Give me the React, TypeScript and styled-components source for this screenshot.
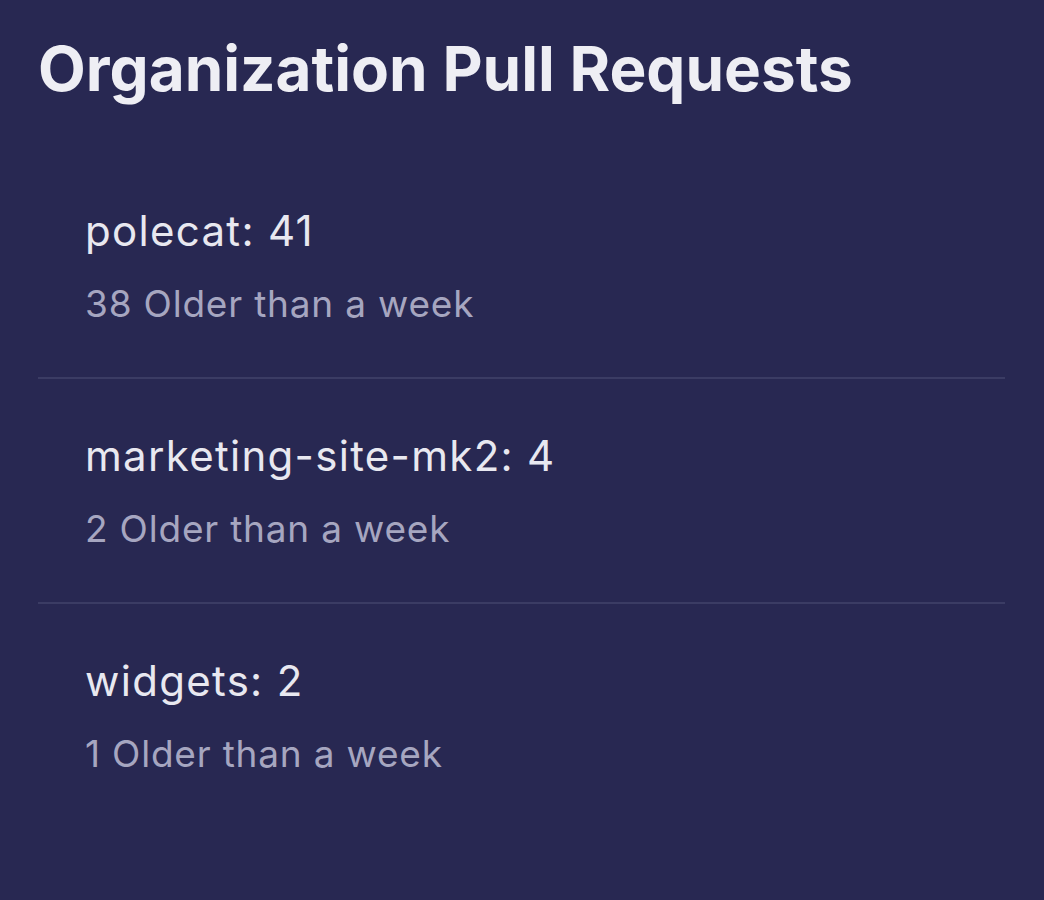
import React from "react";
import styled, { createGlobalStyle } from "styled-components";

const Global = createGlobalStyle`
  html, body { margin: 0; padding: 0; background: #282852; }
  body { font-family: "Inter", sans-serif; font-variant-ligatures: none; }
`;

const Page = styled.div`
  min-height: 100vh;
  box-sizing: border-box;
  background: #282852;
  padding: 34px 38px 0 38px;
`;

const Title = styled.h1`
  margin: 0;
  font-family: "Inter", sans-serif;
  font-weight: 700;
  font-size: 62px;
  line-height: 70px;
  color: #eeeef4;
`;

const List = styled.ul`
  list-style: none;
  margin: 50px 0 0 0;
  padding: 0;
  width: 967px;
`;

const Item = styled.li<{ $last?: boolean }>`
  display: flex;
  flex-direction: column;
  gap: 26px;
  padding: 52px 0 51px 47px;
  border-bottom: ${(p) => (p.$last ? "none" : "2px solid #3b3c64")};
`;

const Name = styled.div`
  font-size: 42px;
  line-height: 50px;
  letter-spacing: 1.3px;
  color: #e8e8f0;
`;

const Sub = styled.div`
  font-size: 37px;
  line-height: 44px;
  letter-spacing: 0.8px;
  color: #a6a6c0;
`;

const repos = [
  { name: "polecat", count: 41, old: 38 },
  { name: "marketing-site-mk2", count: 4, old: 2 },
  { name: "widgets", count: 2, old: 1 },
];

export default function App() {
  return (
    <>
      <Global />
      <Page>
        <Title>Organization Pull Requests</Title>
        <List>
          {repos.map((r, i) => (
            <Item key={r.name} $last={i === repos.length - 1}>
              <Name>
                {r.name}: {r.count}
              </Name>
              <Sub>{r.old} Older than a week</Sub>
            </Item>
          ))}
        </List>
      </Page>
    </>
  );
}
